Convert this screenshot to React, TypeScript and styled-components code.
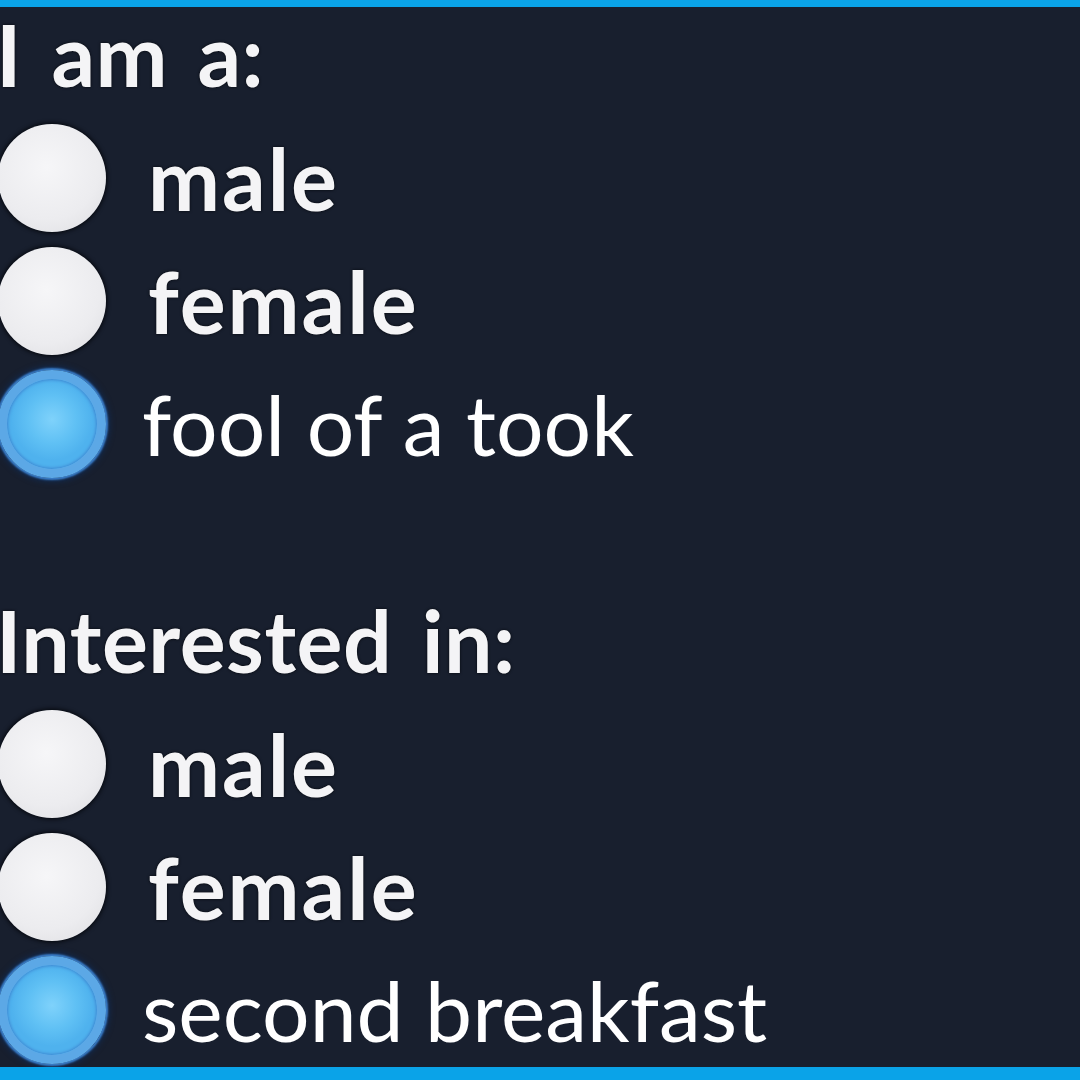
import styled, { createGlobalStyle } from 'styled-components';

type Option = { label: string; checked?: boolean };

const sections: { title: string; options: Option[] }[] = [
  {
    title: 'I am a:',
    options: [
      { label: 'male' },
      { label: 'female' },
      { label: 'fool of a took', checked: true },
    ],
  },
  {
    title: 'Interested in:',
    options: [
      { label: 'male' },
      { label: 'female' },
      { label: 'second breakfast', checked: true },
    ],
  },
];

const App = (): JSX.Element => (
  <>
    <GlobalStyle />
    <Frame>
      {sections.map((section) => (
        <Section key={section.title}>
          <Heading>{section.title}</Heading>
          <List>
            {section.options.map((option) => (
              <Row key={option.label}>
                <Radio checked={option.checked} />
                <Label checked={option.checked}>{option.label}</Label>
              </Row>
            ))}
          </List>
        </Section>
      ))}
    </Frame>
  </>
);

export default App;

const GlobalStyle = createGlobalStyle`
  body {
    margin: 0;
    background: #181f2e;
  }
`;

const Frame = styled.div`
  width: 1080px;
  height: 1080px;
  box-sizing: border-box;
  overflow: hidden;
  background: #181f2e;
  border-top: 7px solid #0aa3e8;
  border-bottom: 13px solid #0aa3e8;
  padding-top: 4px;
  display: flex;
  flex-direction: column;
  gap: 112px;
`;

const Section = styled.section`
  display: flex;
  flex-direction: column;
  gap: 19px;
`;

const Heading = styled.h2`
  margin: 0 0 0 -4px;
  font-family: 'Lato', 'DejaVu Sans', sans-serif;
  font-weight: 700;
  font-size: 86px;
  line-height: 1;
  letter-spacing: 0.5px;
  word-spacing: 8px;
  color: #f4f4f6;
  text-shadow: 0 0 3px #05070c;
`;

const List = styled.div`
  display: flex;
  flex-direction: column;
  margin-left: -2px;
`;

const Row = styled.label`
  height: 123px;
  display: flex;
  align-items: center;
  gap: 42px;
`;

const Radio = styled.span<{ checked?: boolean }>`
  flex: none;
  width: 108px;
  height: 108px;
  box-sizing: border-box;
  border-radius: 50%;
  border: ${(p) => (p.checked ? '9px solid #5ca8e6' : 'none')};
  background: ${(p) =>
    p.checked
      ? 'radial-gradient(circle closest-side at 50% 45%, #7fd2fb 0%, #5fc0f4 60%, #4fb2ee 100%)'
      : 'radial-gradient(circle at 45% 40%, #f6f6f8 0%, #ececef 60%, #dcdce0 100%)'};
  box-shadow: ${(p) =>
    p.checked
      ? 'inset 0 0 3px 1px #3f88d2, 0 0 2px 2px #3a7fcc, 0 0 6px 3px #102d58'
      : '0 0 4px 1px #05070c'};
`;

const Label = styled.span<{ checked?: boolean }>`
  font-family: 'Lato', 'DejaVu Sans', sans-serif;
  font-weight: ${(p) => (p.checked ? 400 : 700)};
  font-size: ${(p) => (p.checked ? '84px' : '86px')};
  line-height: 1;
  letter-spacing: ${(p) => (p.checked ? '0' : '2px')};
  color: ${(p) => (p.checked ? '#ffffff' : '#f4f4f6')};
  text-shadow: ${(p) => (p.checked ? 'none' : '0 0 3px #05070c')};
  margin-left: ${(p) => (p.checked ? '-6px' : '0')};
`;
